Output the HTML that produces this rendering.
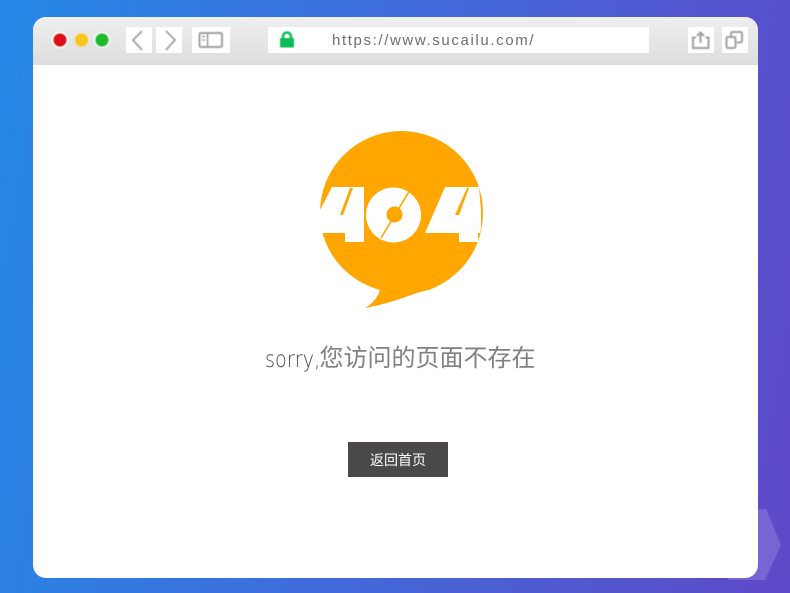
<!DOCTYPE html>
<html><head><meta charset="utf-8"><style>
html,body{margin:0;padding:0;width:790px;height:593px;overflow:hidden}
body{position:relative;background:linear-gradient(100deg,#2589e6 0%,#3f6cdb 45%,#5f49c8 100%);font-family:"Liberation Sans","Noto Sans CJK SC",sans-serif}
.a{position:absolute}
#win{left:33px;top:17px;width:725px;height:561px;background:#fff;border-radius:13px;overflow:hidden}
#bar{left:0;top:0;width:725px;height:48px;background:linear-gradient(#efefef,#dddddd)}
.b{background:#fff;top:27px;height:26px}
</style></head><body>
<svg class="a" style="left:0;top:0" width="790" height="593"><polygon points="745,509 766,509 781,545 765,580 728,580" fill="#7566d3"/></svg>
<div id="win" class="a"><div id="bar" class="a"></div></div>
<svg class="a" style="left:0;top:0;filter:blur(.5px)" width="790" height="70">
<circle cx="60" cy="40" r="8.500" fill="#f3fafa"/><circle cx="60" cy="40" r="6.500" fill="#df0d17"/>
<circle cx="81.500" cy="40" r="6.500" fill="#fcc41d"/>
<circle cx="102" cy="40" r="8.500" fill="#f5f3f5"/><circle cx="102" cy="40" r="6.500" fill="#1dbb2a"/>
</svg>
<div class="a b" style="left:126px;width:26px"></div>
<div class="a b" style="left:156px;width:26px"></div>
<div class="a b" style="left:192px;width:38px"></div>
<div class="a b" style="left:268px;width:381px"></div>
<div class="a b" style="left:688px;width:26px"></div>
<div class="a b" style="left:722px;width:26px"></div>
<svg class="a" style="left:0;top:0;filter:blur(.4px)" width="790" height="70" fill="none" stroke="#a0a0a0">
<path d="M142 31L133 40L142 50" stroke-width="1.800"/>
<path d="M166 31L175 40L166 50" stroke-width="1.800"/>
<rect x="199.500" y="33" width="22.500" height="14" rx="1.500" stroke-width="2"/>
<path d="M207.500 33V47" stroke-width="1.600"/><path d="M202 36.500h3M202 40h3" stroke-width="1.500"/>
<path d="M696 37.500h-3v10.500h15.500v-10.500h-3" stroke-width="2"/><path d="M700.500 43V32.500M697 36l3.500-3.500 3.500 3.500" stroke-width="2"/>
<rect x="726.500" y="37" width="9" height="11" rx="1.500" stroke-width="2"/>
<path d="M731 36.500V33.500a1.500 1.500 0 0 1 1.500-1.500h8a1.500 1.500 0 0 1 1.500 1.500v7.500a1.500 1.500 0 0 1-1.500 1.500h-3.500" stroke-width="2"/>
<path d="M283 39v-2.500a4 4 0 0 1 8 0v2.500" stroke="#0dbb58" stroke-width="2.500"/>
<rect x="280" y="38" width="14" height="9.500" rx="1" fill="#0dbb58" stroke="none"/>
</svg>
<div class="a" style="left:332px;top:31px;font-size:15px;line-height:20px;letter-spacing:1.620px;color:#6e6e6e;white-space:nowrap">https://www.sucailu.com/</div>
<svg class="a" style="left:310px;top:125px" width="180" height="190" viewBox="310 125 180 190">
<path d="M401.500 131A81.500 81.500 0 0 1 483 212.500C483 248 462 277 429 290C412 293 398 302 365 308C374 303 378 296 380 290C345 280 320 250 320 212.500A81.500 81.500 0 0 1 401.500 131Z" fill="#ffa600"/>
<path fill-rule="evenodd" fill="#fff" d="M332 187H364V242H345V233H319V212ZM350 188L340 215H343L353 188Z"/>
<circle cx="393.500" cy="215" r="27.500" fill="#fff"/>
<circle cx="394.500" cy="214.500" r="8" fill="#ffa600"/>
<path d="M410 190L381 238" stroke="#ffa600" stroke-width="1.600"/>
<path fill-rule="evenodd" fill="#fff" d="M445 187H479L481 210V228L480 233H478V242H459V233H425ZM467 188L455 215H459L469 188Z"/>
</svg>
<div class="a" style="left:265px;top:343px;height:32px;font-size:24px;line-height:32px;color:#808080;white-space:nowrap"><span style="position:absolute;left:0;top:0;font-family:'DejaVu Sans',sans-serif;font-weight:200;font-size:23.500px;color:#444;transform:scaleX(.82);transform-origin:0 50%">sorry,</span><span style="position:absolute;left:54.500px;top:0">您访问的页面不存在</span></div>
<div class="a" style="left:348px;top:442px;width:100px;height:35px;background:#4a4848;color:#fff;font-size:14px;line-height:36px;text-align:center">返回首页</div>
</body></html>
